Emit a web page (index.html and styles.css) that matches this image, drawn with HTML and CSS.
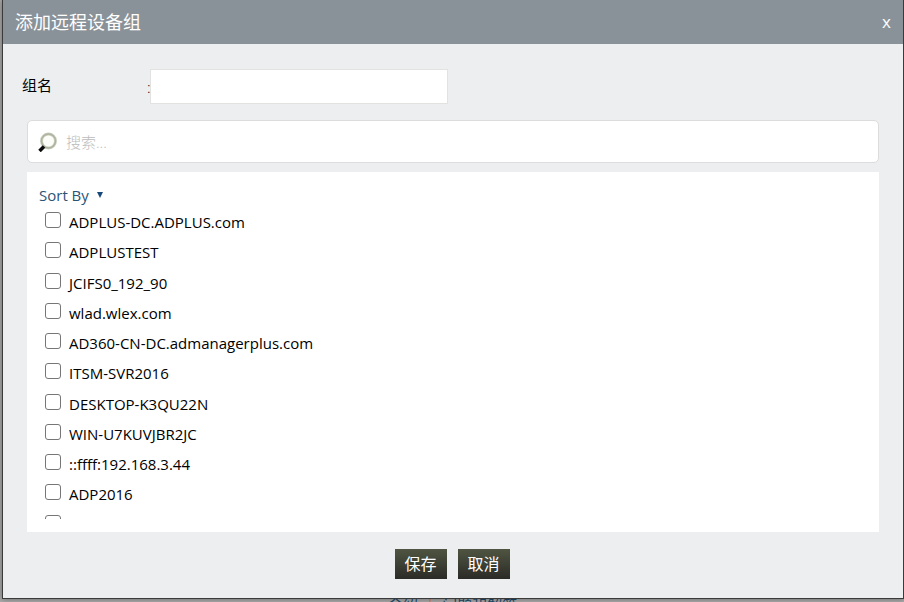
FILE: index.html
```html
<!DOCTYPE html>
<html lang="zh-CN">
<head>
<meta charset="utf-8">
<title>添加远程设备组</title>
<link rel="stylesheet" href="styles.css">
</head>
<body>
<p class="page-links"><a href="#">介绍</a><span class="divider">|</span><a href="#">问题和解答</a></p>
<form class="dialog" role="dialog" aria-labelledby="title">
  <header class="dialog-head">
    <h1 id="title">添加远程设备组</h1>
    <button class="close" type="button">x</button>
  </header>
  <div class="name-row">
    <label for="group">组名</label>
    <span>:</span>
    <input id="group" type="text">
  </div>
  <div class="search">
    <svg viewBox="0 0 20 20" aria-hidden="true">
      <circle cx="10.500" cy="9" r="7" fill="#fcfdf9" stroke="#cdd2c2" stroke-width="3"/>
      <circle cx="10.500" cy="9" r="7" fill="none" stroke="#adb39e" stroke-width="1.500"/>
      <path d="M6 14.500L1.500 19" stroke="#0b0b0b" stroke-width="3.500"/>
    </svg>
    <input type="search" placeholder="搜索..." aria-label="搜索">
  </div>
  <section class="panel">
    <a class="sort" href="#">Sort By <svg viewBox="0 0 6 6" aria-hidden="true"><path d="M0 0H6L3 6Z" fill="#17497a"/></svg></a>
    <div class="scroller">
      <ul class="devices">
        <li><label><input type="checkbox">ADPLUS-DC.ADPLUS.com</label></li>
        <li><label><input type="checkbox">ADPLUSTEST</label></li>
        <li><label><input type="checkbox">JCIFS0_192_90</label></li>
        <li><label><input type="checkbox">wlad.wlex.com</label></li>
        <li><label><input type="checkbox">AD360-CN-DC.admanagerplus.com</label></li>
        <li><label><input type="checkbox">ITSM-SVR2016</label></li>
        <li><label><input type="checkbox">DESKTOP-K3QU22N</label></li>
        <li><label><input type="checkbox">WIN-U7KUVJBR2JC</label></li>
        <li><label><input type="checkbox">::ffff:192.168.3.44</label></li>
        <li><label><input type="checkbox">ADP2016</label></li>
        <li><label><input type="checkbox" aria-label="device"></label></li>
      </ul>
    </div>
  </section>
  <footer class="actions">
    <button type="submit">保存</button>
    <button type="button">取消</button>
  </footer>
</form>
</body>
</html>
```
FILE: styles.css
```css
* { box-sizing: border-box; }
html, body { height: 100%; }
body {
  margin: 0;
  padding: 0 0 3px 2px;
  overflow: hidden;
  background: #aaa;
  font: 15px/20px "Open Sans", "Noto Sans CJK SC", sans-serif;
  color: #000;
}
.page-links {
  position: absolute;
  top: 594px;
  left: 388px;
  margin: 0;
  display: flex;
  gap: 8px;
  font-size: 15px;
  line-height: 20px;
}
.page-links a { color: #1d4a6d; text-decoration: none; }
.divider { color: #c8843c; }
.dialog {
  position: relative;
  display: flex;
  flex-direction: column;
  height: 100%;
  border: 1px solid #3a3a3a;
  border-top: 0;
  background: #edeef0;
  box-shadow: 0 0 6px rgba(0, 0, 0, .4);
}
.dialog-head {
  display: flex;
  align-items: center;
  justify-content: space-between;
  height: 44px;
  padding: 0 12px;
  background: #8a9299;
  color: #fff;
}
h1 { margin: 0; font-size: 18px; line-height: 24px; font-weight: 400; }
.close {
  padding: 0;
  border: 0;
  background: none;
  color: #fff;
  font: 17px/20px "Open Sans", sans-serif;
}
.name-row {
  display: flex;
  align-items: center;
  margin: 25px 24px 16px 19px;
}
.name-row label { width: 125px; padding-bottom: 4px; }
.name-row span { width: 3px; font-weight: 300; }
.name-row input {
  width: 298px;
  height: 35px;
  border: 1px solid #e2e3e0;
  background: #fff;
}
.search {
  display: flex;
  align-items: center;
  gap: 8px;
  height: 43px;
  margin: 0 24px;
  padding: 0 10px;
  border: 1px solid #dcdcdc;
  border-radius: 5px;
  background: #fff;
}
.search svg { width: 20px; height: 20px; }
.search input {
  flex: 1;
  padding: 0;
  border: 0;
  outline: 0;
  background: none;
  font: inherit;
  font-weight: 300;
}
.search input::placeholder { color: #bbb; }
.panel {
  display: flex;
  flex-direction: column;
  flex: 1;
  min-height: 0;
  margin: 9px 24px 0;
  padding: 13px 12px;
  background: #fff;
}
.sort {
  align-self: flex-start;
  display: flex;
  align-items: center;
  gap: 8px;
  color: #2c5375;
  text-decoration: none;
}
.sort svg { width: 6px; height: 6px; }
.scroller { flex: 1; min-height: 0; overflow: hidden; }
.devices {
  display: grid;
  grid-auto-rows: 1fr;
  height: 333px;
  margin: 0;
  padding: 0;
  list-style: none;
}
.devices label { display: flex; align-items: flex-start; gap: 8px; padding: 7px 0 0 6px; }
.devices input {
  appearance: none;
  width: 16px;
  height: 16px;
  margin: 0;
  border: 1px solid #767676;
  border-radius: 3px;
  background: #fff;
}
.devices input:checked { background: #17497a; }
.actions {
  display: flex;
  justify-content: center;
  gap: 11px;
  padding: 17px 2px 19px 0;
}
.actions button {
  width: 52px;
  height: 30px;
  padding: 0;
  border: 0;
  background: linear-gradient(#4f5541, #2b2b27);
  color: #fff;
  font: 16px/24px "Open Sans", "Noto Sans CJK SC", sans-serif;
}
```
